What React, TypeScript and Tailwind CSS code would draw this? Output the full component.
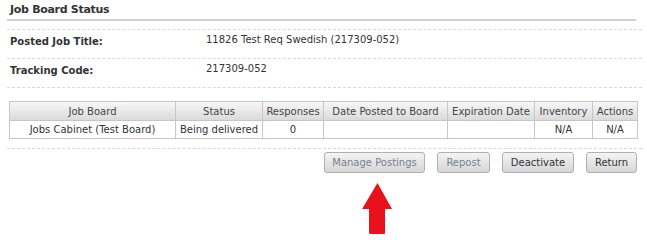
import React from 'react';

const font = { fontFamily: '"DejaVu Sans", Verdana, sans-serif' };

const columns = [
  { label: 'Job Board', w: 'w-[166px]' },
  { label: 'Status', w: 'w-[87px]' },
  { label: 'Responses', w: 'w-[61px]' },
  { label: 'Date Posted to Board', w: 'w-[124px]' },
  { label: 'Expiration Date', w: 'w-[87px]' },
  { label: 'Inventory', w: 'w-[58px]' },
  { label: 'Actions', w: 'w-[45px]' },
];

const row = ['Jobs Cabinet (Test Board)', 'Being delivered', '0', '', '', 'N/A', 'N/A'];

const Button: React.FC<{ label: string; w: string; muted?: boolean }> = ({ label, w, muted }) => (
  <button
    type="button"
    className={`${w} h-[21px] rounded-[3px] border border-[#b0b0b0] bg-gradient-to-b from-[#f4f4f4] to-[#d6d6d6] text-[10px] ${
      muted ? 'text-[#74818e]' : 'text-[#333333]'
    }`}
  >
    {label}
  </button>
);

export default function App() {
  return (
    <div className="w-[647px] h-[237px] bg-white text-[10px] text-[#333333] overflow-hidden" style={font}>
      <div className="pl-[7px]">
        <div className="w-[629px] h-[21px] border-b-2 border-[#d2d2d2] pl-[3px] pt-[2px] text-[11px] font-bold tracking-[-0.3px] text-[#333333]">
          Job Board Status
        </div>

        <div className="w-[635px] mt-[8px] border-t border-dashed border-[#d8d8d8]">
          <div className="flex h-[29px] border-b border-dashed border-[#d8d8d8]">
            <div className="w-[199px] pl-[3px] pt-[4px] font-bold">Posted Job Title:</div>
            <div className="pt-[2px]">11826 Test Req Swedish (217309-052)</div>
          </div>
          <div className="flex h-[29px] border-b border-dashed border-[#d8d8d8]">
            <div className="w-[199px] pl-[3px] pt-[4px] font-bold">Tracking Code:</div>
            <div className="pt-[2px]">217309-052</div>
          </div>
        </div>

        <table className="ml-[2px] mt-[13px] w-[628px] border-collapse table-fixed">
          <thead>
            <tr className="h-[19px] bg-gradient-to-b from-[#f7f7f7] to-[#d9d9d9]">
              {columns.map((c) => (
                <th key={c.label} className={`${c.w} border border-[#c6c6c6] p-0 font-normal text-center text-[#444444]`}>
                  {c.label}
                </th>
              ))}
            </tr>
          </thead>
          <tbody>
            <tr className="h-[18px]">
              {row.map((v, i) => (
                <td key={i} className="border border-[#c6c6c6] p-0 text-center">
                  {v}
                </td>
              ))}
            </tr>
          </tbody>
        </table>

        <div className="w-[635px] mt-[9px] border-t border-dashed border-[#d8d8d8]" />

        <div className="w-[630px] mt-[3px] flex justify-end gap-[12px]">
          <Button label="Manage Postings" w="w-[101px]" muted />
          <Button label="Repost" w="w-[53px]" muted />
          <Button label="Deactivate" w="w-[72px]" />
          <Button label="Return" w="w-[51px]" />
        </div>

        <div className="ml-[355px] mt-[10px]">
          <svg width="31" height="52" viewBox="0 0 31 52">
            <path d="M15.5 0 L30 26 L23 26 L23 50 Q23 51 22 51 L9 51 Q7 51 7 50 L7 26 L0 26 Z" fill="#e8121c" />
          </svg>
        </div>
      </div>
    </div>
  );
}
